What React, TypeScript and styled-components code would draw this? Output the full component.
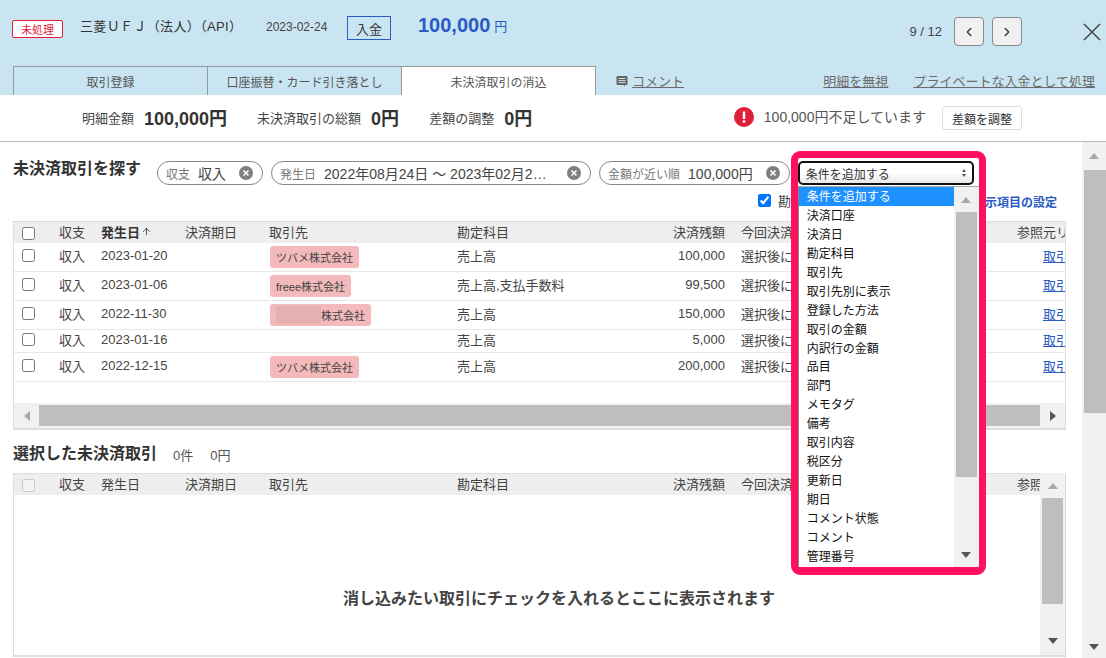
import React from "react";
import styled, { createGlobalStyle } from "styled-components";
import { ChevronLeft, ChevronRight, ArrowUp } from "lucide-react";

const FONT = `"Liberation Sans", "Noto Sans CJK JP", sans-serif`;

const Global = createGlobalStyle`
  html, body { margin: 0; padding: 0; height: 658px; overflow: hidden; background: #fff; }
  body { font-family: ${FONT}; font-size: 13px; color: #444; }
  * { box-sizing: border-box; }
`;

const Page = styled.div`
  width: 1106px;
  height: 658px;
  display: flex;
  flex-direction: column;
  overflow: hidden;
`;

/* ---------- header ---------- */
const Header = styled.header`
  height: 95px;
  background: #c9e5f2;
  display: flex;
  flex-direction: column;
  flex: none;
`;
const TopRow = styled.div`
  height: 66px;
  display: flex;
  align-items: flex-start;
  padding: 16px 3px 0 12px;
`;
const StatusBadge = styled.span`
  width: 51px;
  height: 18px;
  margin-top: 4px;
  border: 1px solid #e0203a;
  border-radius: 2px;
  background: #fff;
  color: #e0203a;
  display: flex;
  align-items: center;
  justify-content: center;
  font-size: 11px;
`;
const BankName = styled.span`
  margin-left: 17px;
  line-height: 22px;
  font-size: 13px;
  letter-spacing: 0.35px;
  color: #333;
  width: 186px;
  white-space: nowrap;
`;
const DateText = styled.span`
  line-height: 22px;
  font-size: 12px;
  color: #444;
  width: 81px;
`;
const DirectionBox = styled.span`
  width: 44px;
  height: 24px;
  border: 1px solid #2a5bc4;
  display: flex;
  align-items: center;
  justify-content: center;
  font-size: 13px;
  color: #333;
`;
const Amount = styled.span`
  margin-left: 27px;
  font-size: 20px;
  font-weight: 700;
  line-height: 18px;
  color: #2a5bc4;
`;
const Yen = styled.span`
  margin-left: 4px;
  margin-top: 3px;
  font-size: 13px;
  line-height: 16px;
  color: #2a5bc4;
`;
const Pager = styled.div`
  margin-left: auto;
  display: flex;
  align-items: center;
  gap: 8px;
  margin-top: 1px;
`;
const PagerText = styled.span`
  font-size: 13px;
  color: #444;
  margin-right: 4px;
`;
const PagerButton = styled.button`
  width: 30px;
  height: 29px;
  padding: 0;
  border: 1px solid #888;
  border-radius: 4px;
  background: #f0f0f0;
  color: #333;
  display: flex;
  align-items: center;
  justify-content: center;
`;
const CloseButton = styled.button`
  width: 22px;
  height: 22px;
  margin-left: 51px;
  padding: 0;
  border: 0;
  background: transparent;
  display: flex;
`;
const TabRow = styled.div`
  height: 29px;
  display: flex;
  align-items: stretch;
  padding: 0 11px 0 13px;
`;
const Tab = styled.div<{ $active?: boolean }>`
  width: 195px;
  border: 1px solid #999;
  border-bottom: 0;
  margin-right: -1px;
  background: ${(p) => (p.$active ? "#fff" : "transparent")};
  color: #555;
  font-size: 12px;
  display: flex;
  align-items: center;
  justify-content: center;
`;
const HeaderLink = styled.a`
  font-size: 13px;
  color: #6b6b6b;
  text-decoration: underline;
  align-self: center;
  white-space: nowrap;
`;
const CommentWrap = styled.div`
  margin-left: 21px;
  display: flex;
  align-items: center;
  gap: 4px;
`;
const RightLinks = styled.div`
  margin-left: auto;
  display: flex;
  align-items: center;
  gap: 25px;
`;

/* ---------- summary ---------- */
const Summary = styled.section`
  height: 47px;
  flex: none;
  border-bottom: 1px solid #bbb;
  display: flex;
  align-items: center;
  padding: 0 84px 2px 82px;
`;
const SummaryLabel = styled.span<{ $gap?: number }>`
  font-size: 13px;
  color: #444;
  margin-left: ${(p) => p.$gap ?? 0}px;
  white-space: nowrap;
`;
const SummaryValue = styled.strong`
  font-size: 18px;
  color: #333;
  margin-left: 10px;
  white-space: nowrap;
`;
const AlertWrap = styled.div`
  margin-left: auto;
  display: flex;
  align-items: center;
`;
const AlertText = styled.span`
  font-size: 14px;
  color: #555;
  margin: -3px 16px 0 10px;
  white-space: nowrap;
`;
const AdjustButton = styled.button`
  width: 80px;
  height: 24px;
  padding: 0;
  border: 1px solid #ddd;
  border-radius: 3px;
  background: #fff;
  font: 12px ${FONT};
  color: #333;
  margin-top: 2px;
`;

/* ---------- body ---------- */
const Body = styled.div`
  flex: 1;
  min-height: 0;
  display: flex;
`;
const Content = styled.main`
  width: 1082px;
  padding: 19px 16px 0 13px;
  display: flex;
  flex-direction: column;
`;
const SearchRow = styled.div`
  height: 24px;
  display: flex;
  align-items: flex-start;
`;
const SectionTitle = styled.h2`
  margin: 0;
  font-size: 16px;
  font-weight: 700;
  line-height: 16px;
  color: #333;
  white-space: nowrap;
`;
const Chips = styled.div`
  margin-left: 16px;
  display: flex;
  gap: 8px;
`;
const Chip = styled.div`
  height: 24px;
  border: 1px solid #888;
  border-radius: 12px;
  padding: 0 9px 0 8px;
  display: flex;
  align-items: center;
  white-space: nowrap;
`;
const ChipLabel = styled.span`
  font-size: 12px;
  color: #777;
  margin-right: 8px;
`;
const ChipValue = styled.span<{ $width?: number }>`
  font-size: 14px;
  color: #444;
  margin-right: 13px;
  width: ${(p) => (p.$width ? `${p.$width}px` : "auto")};
  overflow: hidden;
  text-overflow: ellipsis;
`;
const SelectWrap = styled.div`
  position: relative;
  margin-left: 8px;
  width: 176px;
  height: 24px;
`;
const SelectBox = styled.div`
  position: relative;
  z-index: 3;
  height: 24px;
  border: 2px solid #111;
  border-radius: 5px;
  background: linear-gradient(#fff 50%, #e8e8e8);
  padding: 0 6px;
  display: flex;
  align-items: center;
  justify-content: space-between;
  font-size: 12px;
  color: #333;
`;
const SelectArrows = styled.span`
  display: flex;
  flex-direction: column;
  gap: 2px;
`;
const Highlight = styled.div`
  position: absolute;
  z-index: 2;
  left: -7px;
  top: -10px;
  width: 195px;
  height: 424px;
  border: 7px solid #ff1160;
  border-bottom-width: 8px;
  border-radius: 9px;
  background: #fff;
  padding-top: 28px;
`;
const ListBox = styled.div`
  height: 381px;
  display: flex;
  border-top: 1px solid #aaa;
  border-left: 1px solid #888;
`;
const ListItems = styled.ul`
  flex: 1;
  margin: 0;
  padding: 0;
  list-style: none;
`;
const ListItem = styled.li<{ $selected?: boolean }>`
  height: 18.95px;
  padding: 1px 0 0 8px;
  line-height: 18px;
  font-size: 12px;
  color: ${(p) => (p.$selected ? "#fff" : "#111")};
  background: ${(p) => (p.$selected ? "#1e90ff" : "transparent")};
`;
const OptionsRow = styled.div`
  margin-top: 8px;
  height: 14px;
  display: flex;
  align-items: center;
  justify-content: flex-end;
  padding-right: 9px;
`;
const OptionLabel = styled.label`
  display: flex;
  align-items: center;
  gap: 7px;
  font-size: 13px;
  color: #444;
  width: 215px;
  white-space: nowrap;
`;
const Check = styled.input`
  width: 13px;
  height: 13px;
  margin: 0;
  flex: none;
`;
const SettingsLink = styled.a`
  font-size: 12px;
  font-weight: 700;
  color: #2a5bc4;
  white-space: nowrap;
  margin-top: 2px;
`;
const TableFrame = styled.div<{ $top: number; $height: number }>`
  margin-top: ${(p) => p.$top}px;
  height: ${(p) => p.$height}px;
  width: 1053px;
  flex: none;
  border: 1px solid #ddd;
  border-bottom-width: 2px;
  border-top-width: 0;
  overflow: hidden;
  display: flex;
  flex-direction: column;
`;
const TwoPane = styled.div`
  flex: 1;
  min-height: 0;
  display: flex;
`;
const Grow = styled.div`
  flex: 1;
  min-width: 0;
  overflow: hidden;
  display: flex;
  flex-direction: column;
`;
const COLS = "45px 42px 84px 84px 188px 200px 84px 276px 90px";
const HeadRow = styled.div`
  height: 22px;
  flex: none;
  display: grid;
  grid-template-columns: ${COLS};
  align-items: center;
  background: #eee;
  border-top: 1px solid #ddd;
  color: #444;
  font-size: 13px;
  white-space: nowrap;
`;
const HeadCell = styled.div<{ $right?: boolean; $bold?: boolean }>`
  display: flex;
  align-items: center;
  gap: 1px;
  justify-content: ${(p) => (p.$right ? "flex-end" : "flex-start")};
  padding-right: ${(p) => (p.$right ? 16 : 0)}px;
  padding-bottom: 3px;
  font-weight: ${(p) => (p.$bold ? 700 : 400)};
  color: ${(p) => (p.$bold ? "#333" : "#444")};
`;
const CheckCell = styled.div`
  padding-left: 8px;
  display: flex;
  align-items: center;
`;
const Row = styled.div<{ $h: number }>`
  height: ${(p) => p.$h}px;
  flex: none;
  display: grid;
  grid-template-columns: ${COLS};
  align-items: center;
  padding-bottom: 3px;
  border-bottom: 1px solid #e8e8e8;
  font-size: 13px;
  color: #444;
  white-space: nowrap;
`;
const Cell = styled.div<{ $right?: boolean }>`
  text-align: ${(p) => (p.$right ? "right" : "left")};
  padding-right: ${(p) => (p.$right ? 16 : 0)}px;
`;
const RefLink = styled.a`
  margin-left: 26px;
  color: #2a5bc4;
  text-decoration: underline;
`;
const Tag = styled.span`
  display: inline-flex;
  align-items: center;
  height: 22px;
  margin: 2px 0 0 1px;
  padding: 0 6px;
  border-radius: 3px;
  background: #f3b9bb;
  font-size: 11px;
  color: #444;
  vertical-align: top;
`;
const Redacted = styled.span`
  width: 45px;
  height: 18px;
  background: #e5b0b0;
`;
const TableSpacer = styled.div`
  flex: 1;
`;
const HScroll = styled.div`
  height: 25px;
  flex: none;
  background: #f1f1f1;
  display: flex;
  align-items: stretch;
`;
const HThumb = styled.div`
  flex: 1;
  margin: 2px 0;
  background: #bebebe;
`;
const HEnd = styled.div`
  width: 25px;
  flex: none;
  display: flex;
  align-items: center;
  justify-content: center;
`;
const Arrow = styled.span<{ $dir: "up" | "down" | "left" | "right"; $light?: boolean; $size?: number }>`
  width: 0;
  height: 0;
  flex: none;
  ${(p) => {
    const c = p.$light ? "#a8a8a8" : "#555";
    const s = p.$size ?? 5.5;
    const h = s + 0.5;
    const t = "transparent";
    if (p.$dir === "up") return `border-left:${s}px solid ${t};border-right:${s}px solid ${t};border-bottom:${h}px solid ${c};`;
    if (p.$dir === "down") return `border-left:${s}px solid ${t};border-right:${s}px solid ${t};border-top:${h}px solid ${c};`;
    if (p.$dir === "left") return `border-top:${s}px solid ${t};border-bottom:${s}px solid ${t};border-right:${h}px solid ${c};`;
    return `border-top:${s}px solid ${t};border-bottom:${s}px solid ${t};border-left:${h}px solid ${c};`;
  }}
`;
const VTrack = styled.div<{ $w: number }>`
  width: ${(p) => p.$w}px;
  flex: none;
  background: #f1f1f1;
  display: flex;
  flex-direction: column;
`;
const VEnd = styled.div<{ $h: number }>`
  height: ${(p) => p.$h}px;
  flex: none;
  display: flex;
  align-items: center;
  justify-content: center;
`;
const VThumb = styled.div<{ $h: number; $w: number }>`
  height: ${(p) => p.$h}px;
  width: ${(p) => p.$w}px;
  margin-left: 2px;
  flex: none;
  background: #bebebe;
`;
const VFill = styled.div`
  flex: 1;
`;
const SecondHead = styled.div`
  margin-top: 15px;
  height: 18px;
  display: flex;
  align-items: center;
  flex: none;
`;
const Count = styled.span<{ $gap: number }>`
  margin-left: ${(p) => p.$gap}px;
  font-size: 13px;
  color: #555;
`;
const EmptyArea = styled.div`
  flex: 1;
  display: flex;
  align-items: center;
  justify-content: center;
  padding: 43px 0 0 64px;
  font-size: 16px;
  font-weight: 700;
  color: #444;
  white-space: nowrap;
`;

const ClearIcon = () => (
  <svg width="14" height="14" viewBox="0 0 14 14" style={{ flex: "none" }}>
    <circle cx="7" cy="7" r="7" fill="#808080" />
    <path d="M4.5 4.5l5 5M9.5 4.5l-5 5" stroke="#fff" strokeWidth="1.6" />
  </svg>
);

const CommentIcon = () => (
  <svg width="12" height="12" viewBox="0 0 12 12">
    <path d="M1.5 1h9a1 1 0 0 1 1 1v7a1 1 0 0 1-1 1H9v1.5L7.5 10h-6a1 1 0 0 1-1-1V2a1 1 0 0 1 1-1z" fill="#666" />
    <path d="M2.5 3.5h7M2.5 5.5h7M2.5 7.5h7" stroke="#c9e5f2" strokeWidth="0.9" />
  </svg>
);

const AlertIcon = () => (
  <svg width="20" height="20" viewBox="0 0 20 20">
    <circle cx="10" cy="10" r="10" fill="#e0203a" />
    <rect x="8.8" y="4.5" width="2.4" height="7.5" fill="#fff" />
    <rect x="8.8" y="13.3" width="2.4" height="2.4" fill="#fff" />
  </svg>
);

const CloseIcon = () => (
  <svg width="22" height="22" viewBox="0 0 22 22">
    <path d="M3 3l16 16M19 3L3 19" stroke="#444" strokeWidth="1.5" fill="none" />
  </svg>
);

const headers = (bold: boolean, disabled: boolean) => (
  <HeadRow>
    <CheckCell>
      <Check type="checkbox" disabled={disabled} />
    </CheckCell>
    <HeadCell>収支</HeadCell>
    <HeadCell $bold={bold}>
      発生日
      {bold && <ArrowUp size={11} strokeWidth={1.8} color="#333" />}
    </HeadCell>
    <HeadCell>決済期日</HeadCell>
    <HeadCell>取引先</HeadCell>
    <HeadCell>勘定科目</HeadCell>
    <HeadCell $right>決済残額</HeadCell>
    <HeadCell>今回決済額</HeadCell>
    <HeadCell>参照元リンク</HeadCell>
  </HeadRow>
);

type Item = { h: number; date: string; tag?: React.ReactNode; account: string; amount: string };
const rows: Item[] = [
  { h: 29, date: "2023-01-20", tag: "ツバメ株式会社", account: "売上高", amount: "100,000" },
  { h: 29, date: "2023-01-06", tag: "freee株式会社", account: "売上高,支払手数料", amount: "99,500" },
  { h: 29, date: "2022-11-30", tag: <><Redacted />株式会社</>, account: "売上高", amount: "150,000" },
  { h: 23, date: "2023-01-16", account: "売上高", amount: "5,000" },
  { h: 29, date: "2022-12-15", tag: "ツバメ株式会社", account: "売上高", amount: "200,000" },
];

const options = [
  "条件を追加する", "決済口座", "決済日", "勘定科目", "取引先", "取引先別に表示", "登録した方法",
  "取引の金額", "内訳行の金額", "品目", "部門", "メモタグ", "備考", "取引内容", "税区分", "更新日",
  "期日", "コメント状態", "コメント", "管理番号",
];

export default function App() {
  return (
    <Page>
      <Global />
      <Header>
        <TopRow>
          <StatusBadge>未処理</StatusBadge>
          <BankName>三菱ＵＦＪ（法人）（API）</BankName>
          <DateText>2023-02-24</DateText>
          <DirectionBox>入金</DirectionBox>
          <Amount>100,000</Amount>
          <Yen>円</Yen>
          <Pager>
            <PagerText>9 / 12</PagerText>
            <PagerButton><ChevronLeft size={14} strokeWidth={2.4} /></PagerButton>
            <PagerButton><ChevronRight size={14} strokeWidth={2.4} /></PagerButton>
            <CloseButton aria-label="close"><CloseIcon /></CloseButton>
          </Pager>
        </TopRow>
        <TabRow>
          <Tab>取引登録</Tab>
          <Tab>口座振替・カード引き落とし</Tab>
          <Tab $active>未決済取引の消込</Tab>
          <CommentWrap>
            <CommentIcon />
            <HeaderLink>コメント</HeaderLink>
          </CommentWrap>
          <RightLinks>
            <HeaderLink>明細を無視</HeaderLink>
            <HeaderLink>プライベートな入金として処理</HeaderLink>
          </RightLinks>
        </TabRow>
      </Header>

      <Summary>
        <SummaryLabel>明細金額</SummaryLabel>
        <SummaryValue>100,000円</SummaryValue>
        <SummaryLabel $gap={30}>未決済取引の総額</SummaryLabel>
        <SummaryValue>0円</SummaryValue>
        <SummaryLabel $gap={30}>差額の調整</SummaryLabel>
        <SummaryValue>0円</SummaryValue>
        <AlertWrap>
          <AlertIcon />
          <AlertText>100,000円不足しています</AlertText>
          <AdjustButton>差額を調整</AdjustButton>
        </AlertWrap>
      </Summary>

      <Body>
        <Content>
          <SearchRow>
            <SectionTitle>未決済取引を探す</SectionTitle>
            <Chips>
              <Chip>
                <ChipLabel>収支</ChipLabel>
                <ChipValue>収入</ChipValue>
                <ClearIcon />
              </Chip>
              <Chip>
                <ChipLabel>発生日</ChipLabel>
                <ChipValue $width={230}>2022年08月24日 〜 2023年02月24日{"\u00a0\u00a0"}</ChipValue>
                <ClearIcon />
              </Chip>
              <Chip>
                <ChipLabel>金額が近い順</ChipLabel>
                <ChipValue>100,000円</ChipValue>
                <ClearIcon />
              </Chip>
            </Chips>
            <SelectWrap>
              <SelectBox>
                条件を追加する
                <SelectArrows>
                  <Arrow $dir="up" $size={2.5} />
                  <Arrow $dir="down" $size={2.5} />
                </SelectArrows>
              </SelectBox>
              <Highlight>
                <ListBox>
                  <ListItems>
                    {options.map((o, i) => (
                      <ListItem key={o} $selected={i === 0}>{o}</ListItem>
                    ))}
                  </ListItems>
                  <VTrack $w={25}>
                    <VEnd $h={25}><Arrow $dir="up" $light /></VEnd>
                    <VThumb $h={265} $w={21} />
                    <VFill />
                    <VEnd $h={24}><Arrow $dir="down" /></VEnd>
                  </VTrack>
                </ListBox>
              </Highlight>
            </SelectWrap>
          </SearchRow>

          <OptionsRow>
            <OptionLabel>
              <Check type="checkbox" defaultChecked />
              勘定科目で絞り込む
            </OptionLabel>
            <SettingsLink>表示項目の設定</SettingsLink>
          </OptionsRow>

          <TableFrame $top={14} $height={209}>
            {headers(true, false)}
            {rows.map((r) => (
              <Row key={r.date} $h={r.h}>
                <CheckCell><Check type="checkbox" /></CheckCell>
                <Cell>収入</Cell>
                <Cell>{r.date}</Cell>
                <Cell />
                <Cell>{r.tag && <Tag>{r.tag}</Tag>}</Cell>
                <Cell>{r.account}</Cell>
                <Cell $right>{r.amount}</Cell>
                <Cell>選択後に入力</Cell>
                <Cell><RefLink>取引明細</RefLink></Cell>
              </Row>
            ))}
            <TableSpacer />
            <HScroll>
              <HEnd><Arrow $dir="left" $light /></HEnd>
              <HThumb />
              <HEnd><Arrow $dir="right" /></HEnd>
            </HScroll>
          </TableFrame>

          <SecondHead>
            <SectionTitle>選択した未決済取引</SectionTitle>
            <Count $gap={16}>0件</Count>
            <Count $gap={17}>0円</Count>
          </SecondHead>

          <TableFrame $top={10} $height={184}>
            <TwoPane>
              <Grow>
                {headers(false, true)}
                <EmptyArea>消し込みたい取引にチェックを入れるとここに表示されます</EmptyArea>
              </Grow>
              <VTrack $w={25}>
                <VEnd $h={25}><Arrow $dir="up" $light /></VEnd>
                <VThumb $h={106} $w={21} />
                <VFill />
                <VEnd $h={28}><Arrow $dir="down" /></VEnd>
              </VTrack>
            </TwoPane>
          </TableFrame>
        </Content>

        <VTrack $w={24}>
          <VEnd $h={28}><Arrow $dir="up" $light /></VEnd>
          <VThumb $h={243} $w={22} />
          <VFill />
          <VEnd $h={22}><Arrow $dir="down" /></VEnd>
        </VTrack>
      </Body>
    </Page>
  );
}
